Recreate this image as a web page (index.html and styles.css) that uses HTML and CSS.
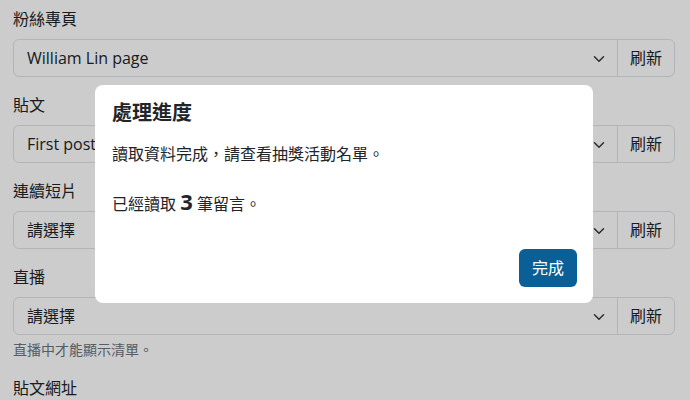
FILE: index.html
```html
<!DOCTYPE html>
<html lang="zh-Hant">
<head>
<meta charset="utf-8">
<link rel="stylesheet" href="styles.css">
</head>
<body>
<div class="page">
  <div class="field">
    <div class="label">粉絲專頁</div>
    <div class="group">
      <div class="select"><span>William Lin page</span><svg class="chev" viewBox="0 0 16 16" width="12" height="12"><path d="m2 5 6 6 6-6" fill="none" stroke="#343a40" stroke-width="2" stroke-linecap="round" stroke-linejoin="round"/></svg></div>
      <div class="btn-refresh">刷新</div>
    </div>
  </div>
  <div class="field">
    <div class="label">貼文</div>
    <div class="group">
      <div class="select"><span>First post</span><svg class="chev" viewBox="0 0 16 16" width="12" height="12"><path d="m2 5 6 6 6-6" fill="none" stroke="#343a40" stroke-width="2" stroke-linecap="round" stroke-linejoin="round"/></svg></div>
      <div class="btn-refresh">刷新</div>
    </div>
  </div>
  <div class="field">
    <div class="label">連續短片</div>
    <div class="group">
      <div class="select"><span>請選擇</span><svg class="chev" viewBox="0 0 16 16" width="12" height="12"><path d="m2 5 6 6 6-6" fill="none" stroke="#343a40" stroke-width="2" stroke-linecap="round" stroke-linejoin="round"/></svg></div>
      <div class="btn-refresh">刷新</div>
    </div>
  </div>
  <div class="field">
    <div class="label">直播</div>
    <div class="group">
      <div class="select"><span>請選擇</span><svg class="chev" viewBox="0 0 16 16" width="12" height="12"><path d="m2 5 6 6 6-6" fill="none" stroke="#343a40" stroke-width="2" stroke-linecap="round" stroke-linejoin="round"/></svg></div>
      <div class="btn-refresh">刷新</div>
    </div>
    <div class="help">直播中才能顯示清單。</div>
  </div>
  <div class="field">
    <div class="label">貼文網址</div>
  </div>
</div>
<div class="backdrop"></div>
<div class="modal">
  <div class="modal-title">處理進度</div>
  <div class="modal-body">
    <p class="msg">讀取資料完成，請查看抽獎活動名單。</p>
    <p class="msg">已經讀取 <b class="count">3</b> 筆留言。</p>
  </div>
  <div class="modal-footer">
    <div class="btn-done">完成</div>
  </div>
</div>
</body>
</html>
```

FILE: styles.css
```css
* { box-sizing: border-box; }
html, body { margin: 0; padding: 0; }
body {
  width: 690px;
  height: 400px;
  overflow: hidden;
  background: #ffffff;
  color: #212529;
  font-family: "Open Sans", "Noto Sans CJK TC", sans-serif;
  font-size: 16px;
  line-height: 1.5;
}
.page {
  padding: 7px 15px 0 13px;
}
.field {
  margin-bottom: 16px;
}
.label {
  height: 24px;
  line-height: 24px;
  margin-bottom: 8px;
}
.group {
  display: flex;
  height: 38px;
}
.select {
  flex: 1;
  display: flex;
  align-items: center;
  justify-content: space-between;
  border: 1px solid #dee2e6;
  border-radius: 6px 0 0 6px;
  padding: 0 12px 0 13px;
  background: #ffffff;
}
.chev { display: block; margin-top: 1px; }
.btn-refresh {
  width: 58px;
  margin-left: -1px;
  display: flex;
  align-items: center;
  justify-content: center;
  border: 1px solid #dee2e6;
  border-radius: 0 6px 6px 0;
}
.help {
  margin-top: 4px;
  font-size: 14px;
  line-height: 21px;
  color: #6c757d;
}
.backdrop {
  position: fixed;
  inset: 0;
  background: rgba(0, 0, 0, 0.2);
}
.modal {
  position: fixed;
  left: 95px;
  top: 85px;
  width: 498px;
  height: 218px;
  background: #ffffff;
  border-radius: 8px;
  padding: 16px 16px 16px 17px;
  display: flex;
  flex-direction: column;
}
.modal-title {
  font-size: 20px;
  font-weight: 700;
  line-height: 24px;
}
.modal-body {
  padding-top: 17px;
  flex: 1;
}
.msg {
  margin: 0 0 16px;
  line-height: 24px;
}
.msg + .msg { line-height: 38px; margin-top: 16px; }
.count {
  font-size: 22px;
  font-weight: 700;
}
.modal-footer {
  display: flex;
  justify-content: flex-end;
}
.btn-done {
  width: 58px;
  height: 38px;
  border-radius: 6px;
  background: #0a6096;
  color: #ffffff;
  display: flex;
  align-items: center;
  justify-content: center;
}
```
